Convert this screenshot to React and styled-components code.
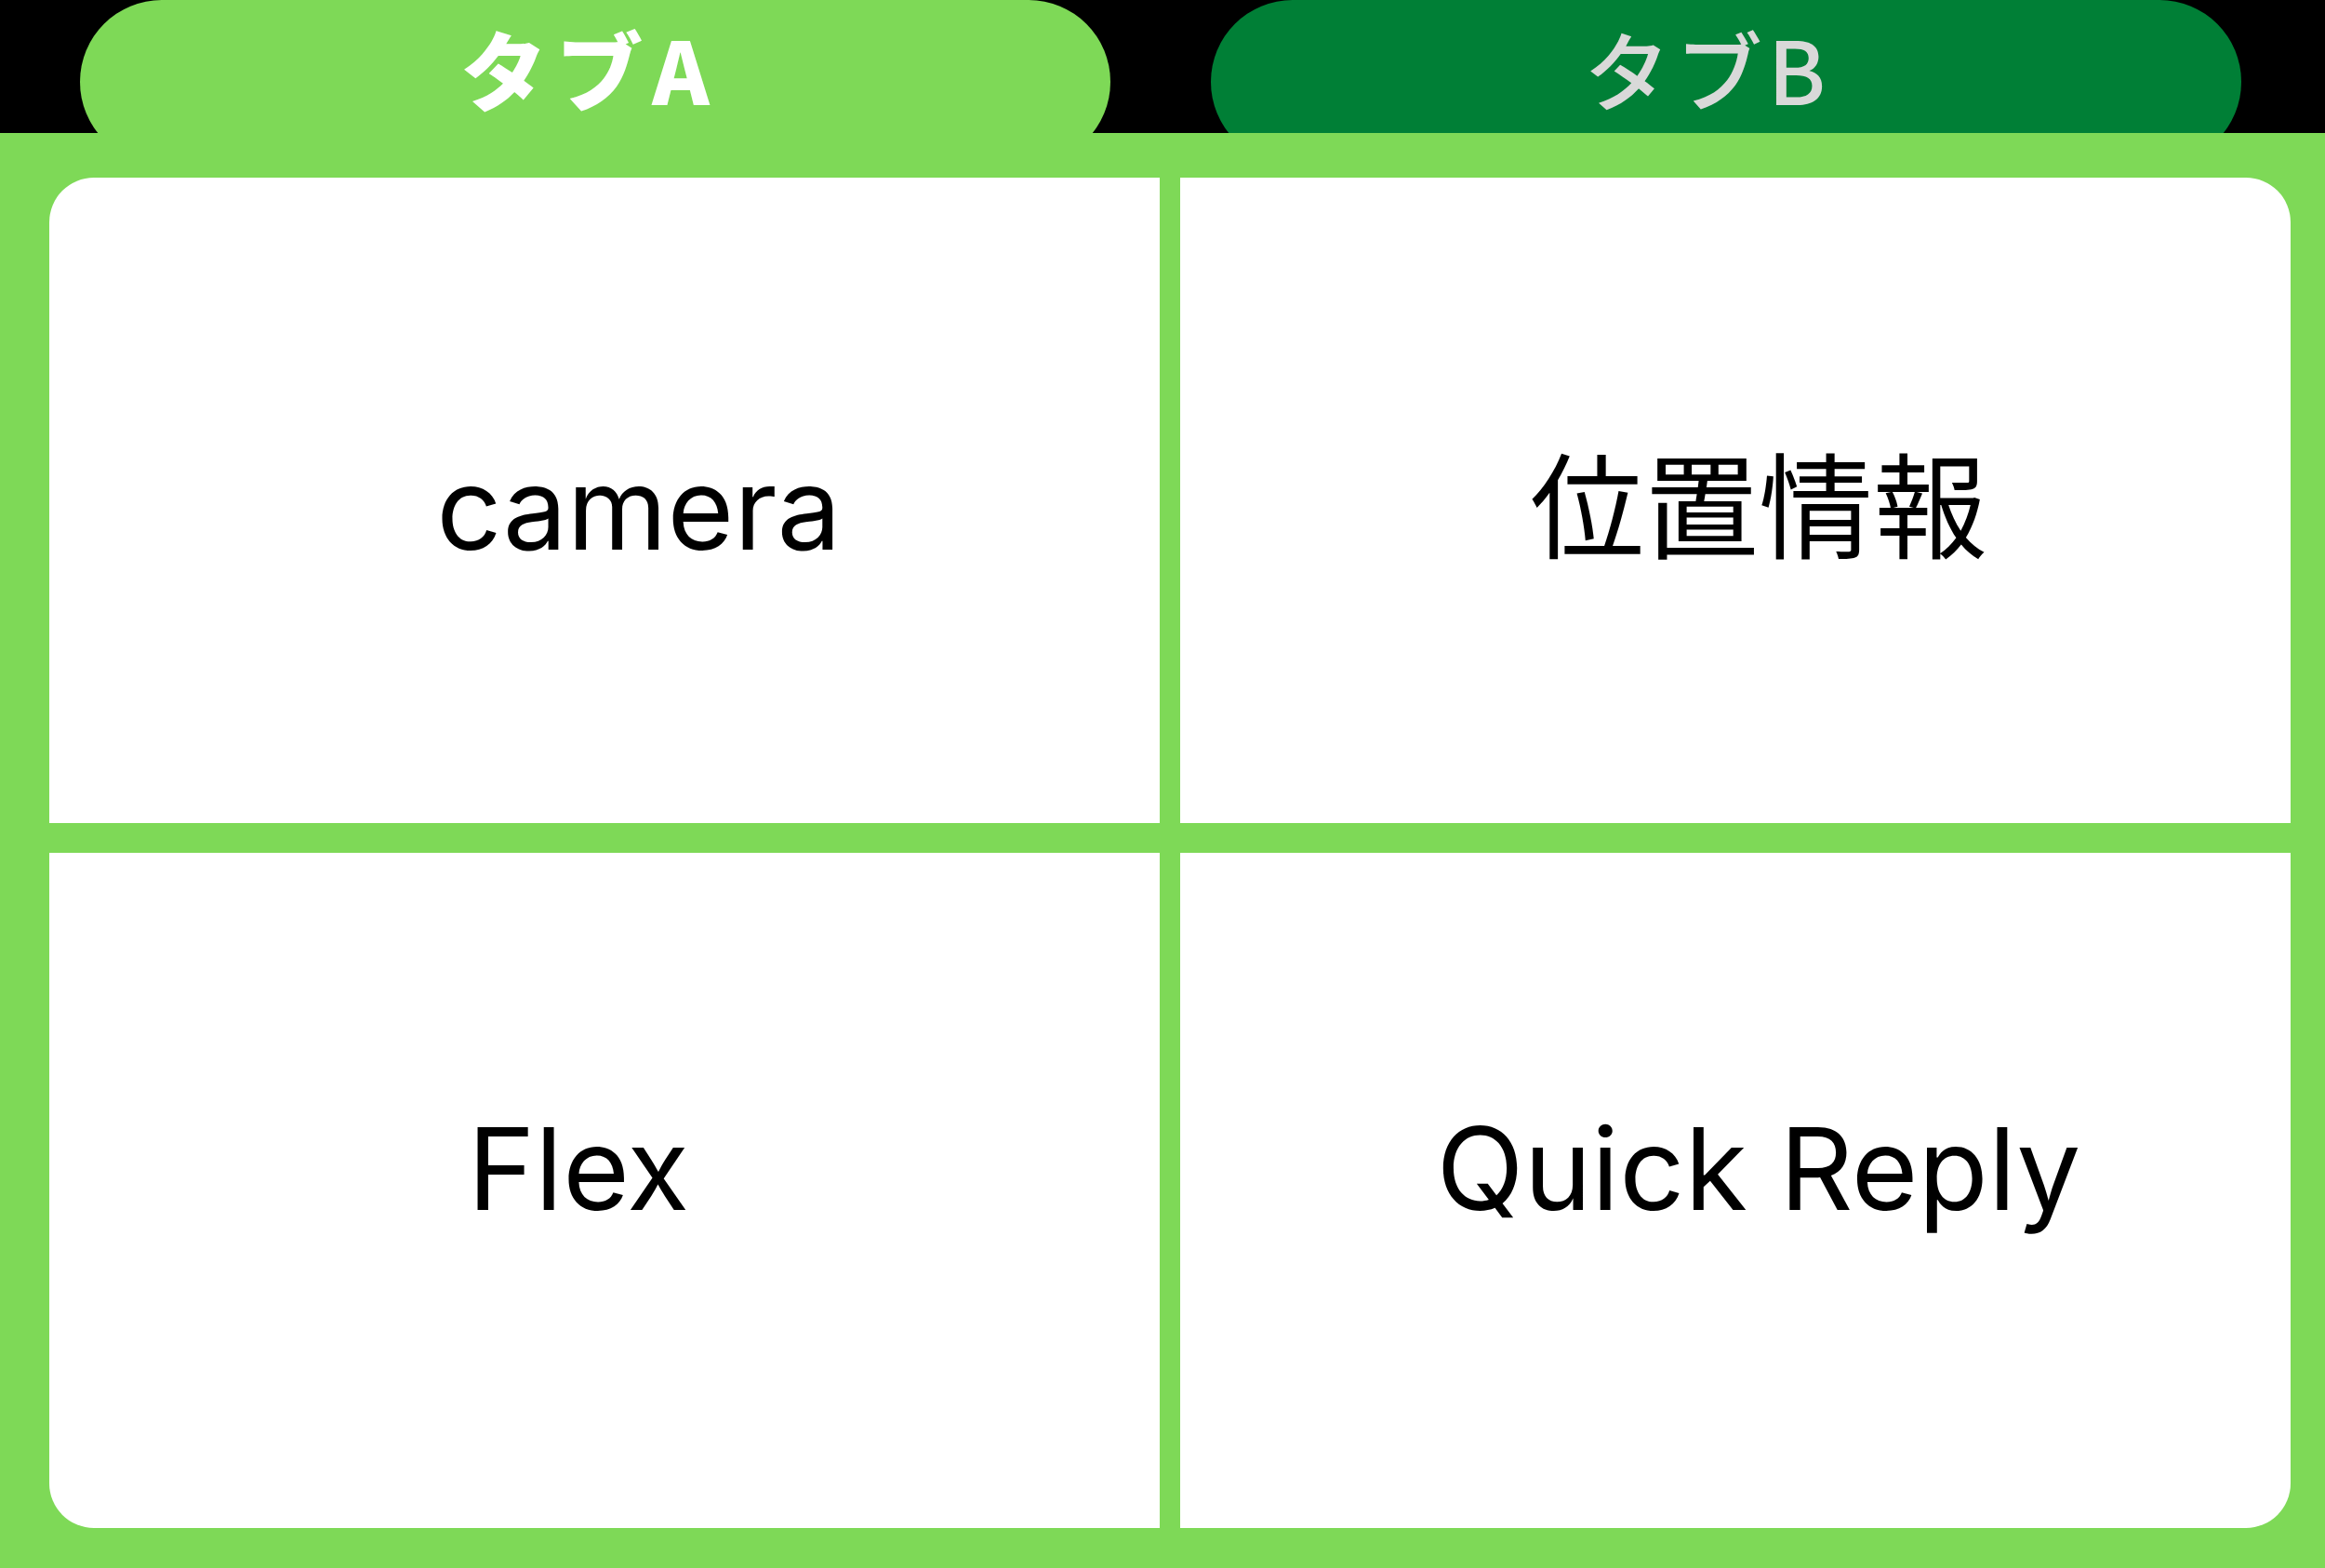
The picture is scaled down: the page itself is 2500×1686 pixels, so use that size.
import React from "react";
import styled, { createGlobalStyle } from "styled-components";

const LIGHT = "#7ed957";
const DARK = "#007f36";

const GlobalStyle = createGlobalStyle`
  html, body {
    margin: 0;
    padding: 0;
    background: #000;
  }
  body {
    font-family: Inter, "Noto Sans CJK JP", sans-serif;
  }
`;

const tabs = [
  { label: "タブA", active: true, dx: -6 },
  { label: "タブB", active: false, dx: -20 },
];

const items = [
  { label: "camera", dx: 37, dy: 8, corner: "tl" },
  { label: "位置情報", dx: 25, dy: 8, corner: "tr" },
  { label: "Flex", dx: -28, dy: -24, corner: "bl" },
  { label: "Quick Reply", dx: 25, dy: -24, corner: "br" },
];

function App() {
  return (
    <>
      <GlobalStyle />
      <Page>
        <TabBar>
          {tabs.map((tab) => (
            <Tab key={tab.label} $active={tab.active} $dx={tab.dx}>
              {tab.label}
            </Tab>
          ))}
        </TabBar>
        <Panel>
          {items.map((item) => (
            <Card key={item.label} $corner={item.corner} $dx={item.dx} $dy={item.dy}>
              <Label>{item.label}</Label>
            </Card>
          ))}
        </Panel>
      </Page>
    </>
  );
}

const Page = styled.div`
  width: 2500px;
  height: 1686px;
  display: flex;
  flex-direction: column;
  background: #000;
`;

const TabBar = styled.div`
  height: 143px;
  flex: 0 0 143px;
  display: flex;
  align-items: flex-start;
  gap: 108px;
  padding-left: 86px;
  overflow: hidden;
`;

const Tab = styled.div`
  width: 1108px;
  height: 176px;
  flex: 0 0 1108px;
  border-radius: 88px;
  background: ${(p) => (p.$active ? LIGHT : DARK)};
  color: ${(p) => (p.$active ? "#ffffff" : "#d9d9d9")};
  display: flex;
  justify-content: center;
  align-items: flex-start;
  box-sizing: border-box;
  padding-top: 26px;
  padding-left: ${(p) => Math.max(0, p.$dx * 2)}px;
  padding-right: ${(p) => Math.max(0, -p.$dx * 2)}px;
  font-family: "Noto Sans CJK JP", sans-serif;
  font-weight: ${(p) => (p.$active ? 900 : 500)};
  font-size: 93px;
  line-height: 93px;
  letter-spacing: ${(p) => (p.$active ? 10 : 6)}px;
`;

const Panel = styled.div`
  flex: 1;
  background: ${LIGHT};
  box-sizing: border-box;
  padding: 48px 37px 43px 53px;
  display: grid;
  grid-template-columns: 1fr 1fr;
  grid-template-rows: 694px 726px;
  column-gap: 22px;
  row-gap: 32px;
`;

const radius = {
  tl: "48px 0 0 0",
  tr: "0 48px 0 0",
  bl: "0 0 0 48px",
  br: "0 0 48px 0",
};

const Card = styled.div`
  background: #fff;
  border-radius: ${(p) => radius[p.$corner]};
  display: flex;
  align-items: center;
  justify-content: center;
  box-sizing: border-box;
  padding-left: ${(p) => Math.max(0, p.$dx * 2)}px;
  padding-right: ${(p) => Math.max(0, -p.$dx * 2)}px;
  padding-top: ${(p) => Math.max(0, p.$dy * 2)}px;
  padding-bottom: ${(p) => Math.max(0, -p.$dy * 2)}px;
`;

const Label = styled.span`
  font-family: Inter, "Noto Sans CJK JP", sans-serif;
  font-size: 123px;
  line-height: 1;
  color: #000;
  white-space: nowrap;
`;

export default App;
